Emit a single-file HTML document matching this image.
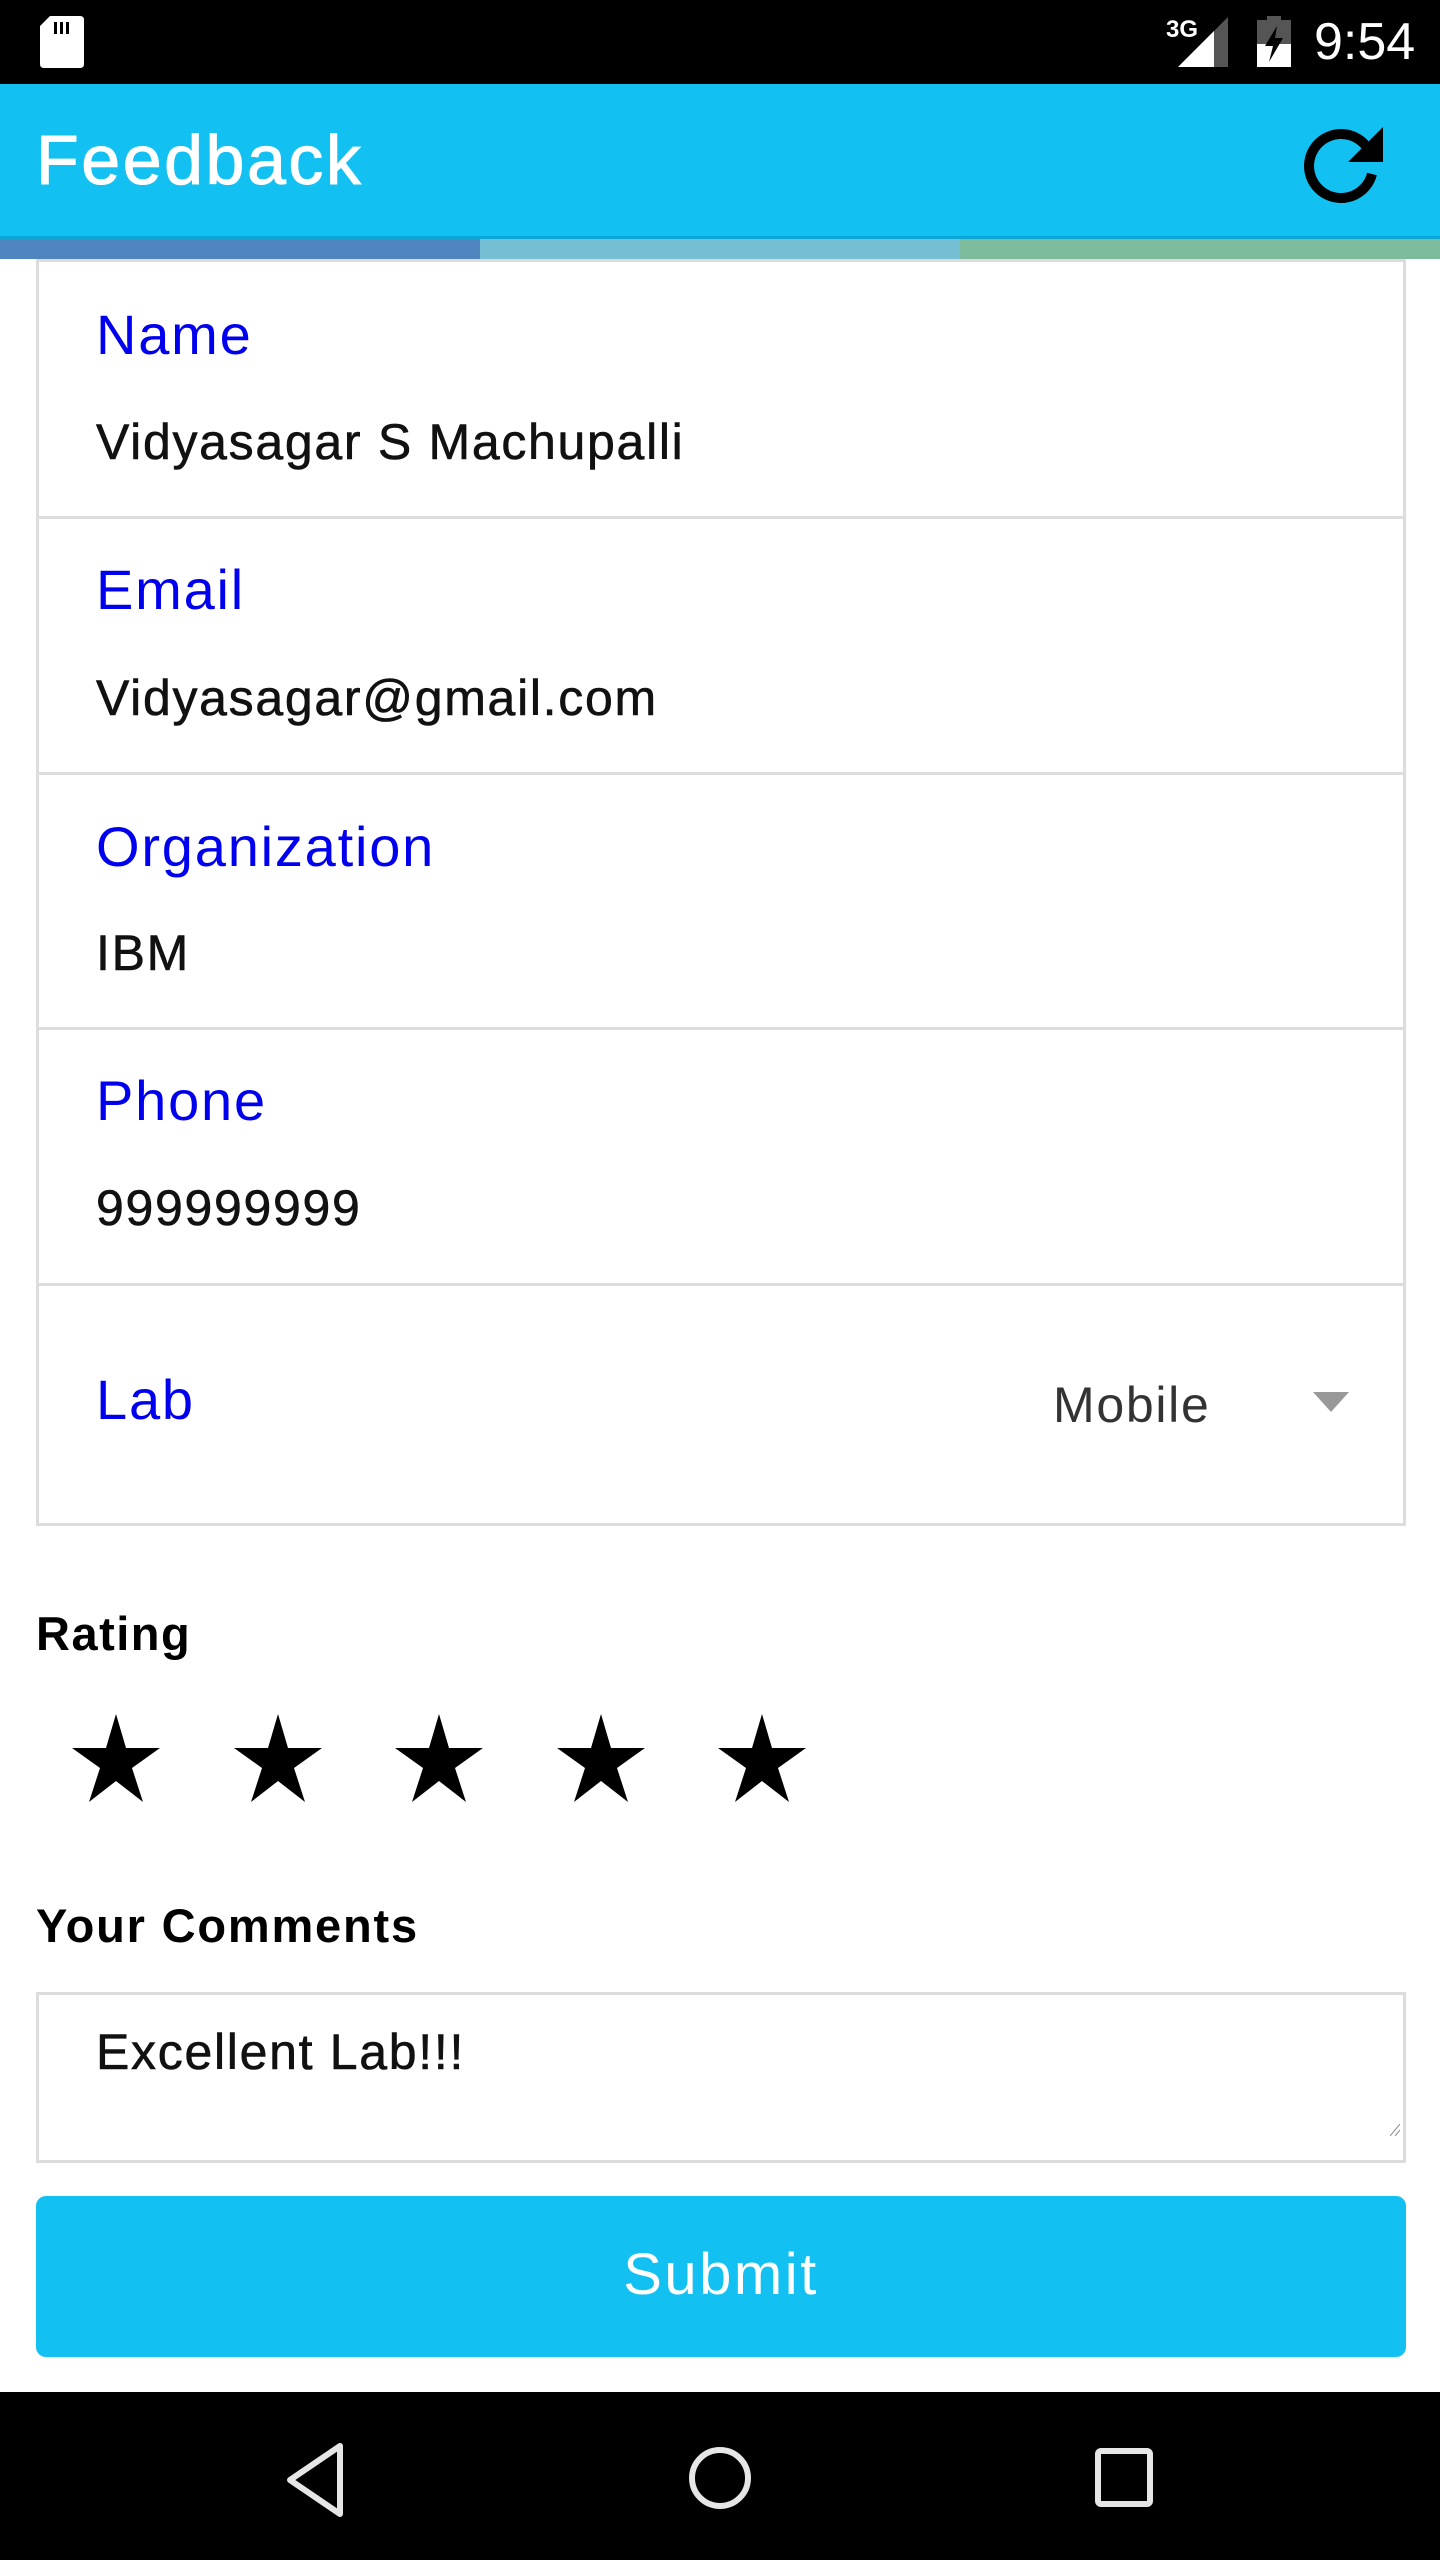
<!DOCTYPE html>
<html><head><meta charset="utf-8"><style>
*{margin:0;padding:0;box-sizing:border-box}
body{width:1440px;height:2560px;position:relative;background:#fff;font-family:"Liberation Sans",sans-serif;overflow:hidden}
.abs{position:absolute}
.lbl{position:absolute;left:96px;color:#0000ee;font-size:56px;letter-spacing:1.8px;line-height:1}
.val{position:absolute;left:96px;color:#111;font-size:50px;letter-spacing:1.7px;line-height:1;-webkit-text-stroke:0.6px #111}
.row{position:absolute;left:36px;width:1370px;border:3px solid #dcdcdc;background:#fff}
</style></head><body>
<div class="abs" style="left:0;top:0;width:1440px;height:84px;background:#000"></div>
<svg class="abs" style="left:40px;top:16px" width="44" height="52"><path d="M10 0H40Q44 0 44 4V48Q44 52 40 52H4Q0 52 0 48V10Z" fill="#fff"/><rect x="14" y="6" width="3" height="12" fill="#000"/><rect x="20" y="6" width="3" height="12" fill="#000"/><rect x="26" y="6" width="3" height="12" fill="#000"/></svg>
<div class="abs" style="left:1166px;top:16px;color:#fff;font-size:24px;font-weight:bold">3G</div>
<svg class="abs" style="left:1178px;top:17px" width="50" height="50"><path d="M50 0V50H0Z" fill="#555"/><path d="M36 14V50H0Z" fill="#fff"/></svg>
<svg class="abs" style="left:1257px;top:16px" width="34" height="51"><rect x="10" y="0" width="14" height="5" fill="#555"/><rect x="0" y="4" width="34" height="47" fill="#555"/><rect x="0" y="28" width="34" height="23" fill="#fff"/><path d="M20 10L8 30H16L12 46L26 22H18Z" fill="#000"/></svg>
<div class="abs" style="left:1314px;top:14px;color:#fff;font-size:52px;line-height:56px">9:54</div>
<div class="abs" style="left:0;top:84px;width:1440px;height:152px;background:#12c1f2"></div>
<div class="abs" style="left:36px;top:120px;color:#fff;font-size:70px;letter-spacing:2.5px;line-height:80px;-webkit-text-stroke:1px #fff">Feedback</div>
<svg class="abs" style="left:1296px;top:120px" width="96" height="90"><path d="M76 54A32 32 0 1 1 70 26" fill="none" stroke="#000" stroke-width="10"/><path d="M87 7V42H52Z" fill="#000"/></svg>
<div class="abs" style="left:0;top:236px;width:1440px;height:3px;background:#0aa6d6"></div>
<div class="abs" style="left:0;top:239px;width:480px;height:20px;background:#5085bf"></div>
<div class="abs" style="left:480px;top:239px;width:480px;height:20px;background:#74bfd3"></div>
<div class="abs" style="left:960px;top:239px;width:480px;height:20px;background:#7cbc9c"></div>
<div class="row" style="top:259px;height:260px"></div>
<div class="row" style="top:516px;height:259px"></div>
<div class="row" style="top:772px;height:258px"></div>
<div class="row" style="top:1027px;height:259px"></div>
<div class="row" style="top:1283px;height:243px"></div>
<div class="lbl" style="top:307px">Name</div><div class="val" style="top:417px">Vidyasagar S Machupalli</div>
<div class="lbl" style="top:562px">Email</div><div class="val" style="top:673px">Vidyasagar@gmail.com</div>
<div class="lbl" style="top:819px">Organization</div><div class="val" style="top:928px">IBM</div>
<div class="lbl" style="top:1073px">Phone</div><div class="val" style="top:1183px">999999999</div>
<div class="lbl" style="top:1372px">Lab</div>
<div class="abs" style="left:1053px;top:1380px;color:#333;font-size:50px;letter-spacing:1.7px;line-height:1">Mobile</div>
<svg class="abs" style="left:1313px;top:1392px" width="36" height="20"><path d="M0 0H36L18 20Z" fill="#999"/></svg>
<div class="abs" style="left:36px;top:1608px;font-size:47px;font-weight:bold;line-height:52px;letter-spacing:1.5px">Rating</div>
<svg class="abs" style="left:60px;top:1712px" width="760" height="96">
<defs><path id="s" d="M0 -44L10 -10H44L16 10L27 44L0 23L-27 44L-16 10L-44 -10H-10Z"/></defs>
<use href="#s" x="56" y="46"/><use href="#s" x="218" y="46"/><use href="#s" x="379" y="46"/><use href="#s" x="541" y="46"/><use href="#s" x="702" y="46"/></svg>
<div class="abs" style="left:36px;top:1900px;font-size:47px;font-weight:bold;line-height:52px;letter-spacing:1.8px">Your Comments</div>
<div class="row" style="top:1992px;height:171px"></div>
<div class="val" style="top:2027px">Excellent Lab!!!</div>
<svg class="abs" style="left:1390px;top:2124px" width="10" height="12"><path d="M0 12L10 0M5 12L10 6" stroke="#888" stroke-width="1"/></svg>
<div class="abs" style="left:36px;top:2196px;width:1370px;height:161px;background:#12c1f2;border-radius:10px;color:#fff;font-size:58px;letter-spacing:2.5px;text-align:center;line-height:158px">Submit</div>
<div class="abs" style="left:0;top:2392px;width:1440px;height:168px;background:#000"></div>
<svg class="abs" style="left:280px;top:2440px" width="900" height="80">
<path d="M60 6V74L10 40Z" fill="none" stroke="#e6e6e6" stroke-width="6" stroke-linejoin="round"/>
<circle cx="440" cy="38" r="28" fill="none" stroke="#e6e6e6" stroke-width="6"/>
<rect x="818" y="11" width="52" height="53" rx="3" fill="none" stroke="#e6e6e6" stroke-width="6"/>
</svg>
</body></html>
